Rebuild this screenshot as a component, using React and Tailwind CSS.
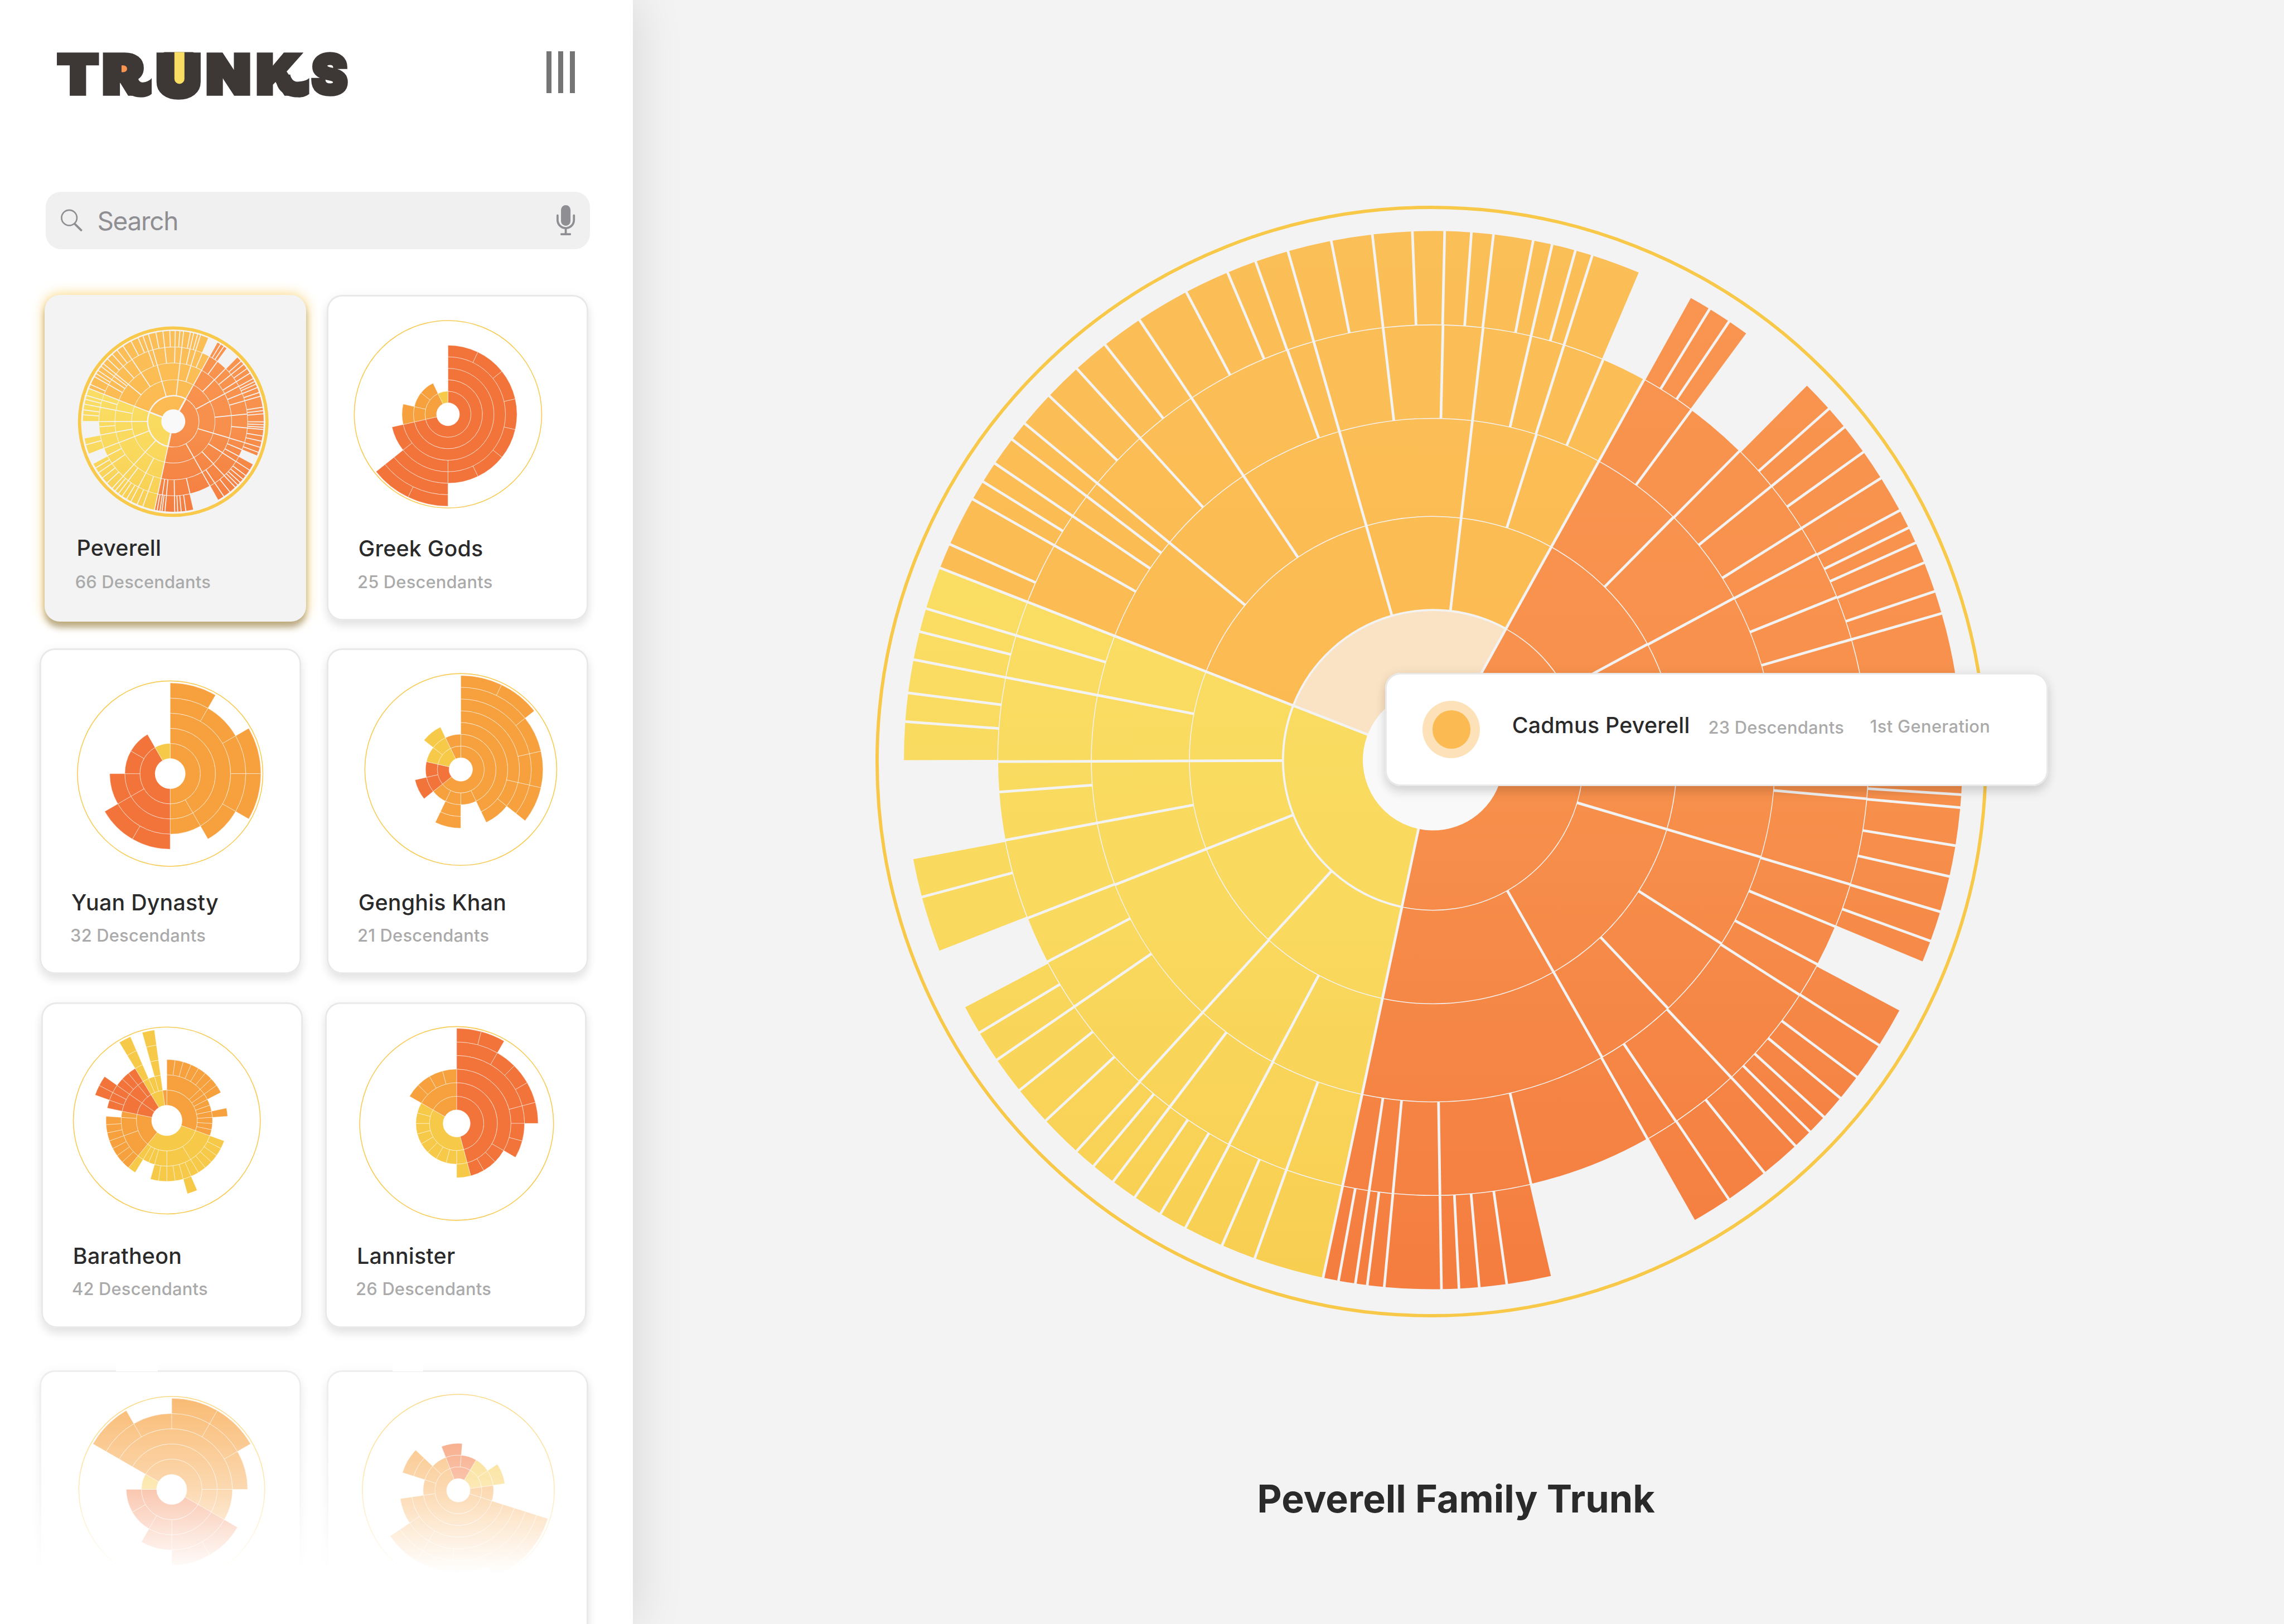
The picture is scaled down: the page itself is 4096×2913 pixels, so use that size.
const PALETTE = {
  amber: '#F7A13E',
  red: '#F2743A',
  yellow: '#F7C948',
};

const point = (r, deg) => {
  const t = (deg * Math.PI) / 180;
  return `${(r * Math.sin(t)).toFixed(2)} ${(-r * Math.cos(t)).toFixed(2)}`;
};

// Ring sector from angle a to b (clockwise from twelve o'clock), with parallel side gaps.
const sector = (r1, r2, a, b, gap = 0) => {
  const p1 = ((gap / 2 / r1) * 180) / Math.PI;
  const p2 = ((gap / 2 / r2) * 180) / Math.PI;
  const large = b - a > 180 ? 1 : 0;
  return `M${point(r1, a + p1)}L${point(r2, a + p2)}A${r2} ${r2} 0 ${large} 1 ${point(r2, b - p2)}L${point(r1, b - p1)}A${r1} ${r1} 0 ${large} 0 ${point(r1, a + p1)}Z`;
};

/* ---------- Peverell ---------- */

const PEVERELL = [
  { from: 133, to: 284, runs: [[29, 192, 291.3, 389]] },
  { from: 284, to: 461, runs: [[29, 61.6, 106.5, 150.4, 192, 222.5, 248.6, 269.8, 291.3, 344.08, 366.6, 389]] },
  {
    from: 461,
    to: 646.5,
    runs: [[29, 44.7, 61.7, 84.3, 106.5, 122.5, 136.6, 150.4, 192, 208, 222.4, 248.6, 259.4, 269.8, 280.95, 291.3, 309.5, 326.3, 344.08, 366.6, 377.6, 389]],
  },
  {
    from: 646.5,
    to: 823.5,
    runs: [[
      29, 36.4, 44.75, 51, 57.8, 61.75, 68, 73.9, 84.3, 95.1, 106.6, 112.5, 118, 122.65, 136.8, 146.1, 150.5, 167,
      179.1, 185.3, 188.45, 192, 199.7, 207.95, 217.2, 222.4, 235.5, 242.4, 248.7, 259.4, 265.8, 269.8, 280.95, 286.65,
      291.3, 299.55, 304.1, 307.3, 309.5, 317.7, 326.3, 340.45, 344.08, 353.4, 361.3, 366.6, 373, 377.5, 383, 389,
    ]],
  },
  {
    from: 823.5,
    to: 1001,
    runs: [
      [29, 31.5, 34, 36.4],
      [44.8, 48.4, 51, 54.4, 57.8, 61.85, 63.95, 65.75, 68.1, 71.4, 73.9, 81, 83.2, 85.2, 90.3, 92.1, 93.75, 95.15, 99.3, 102.7, 106.65, 110, 112.5],
      [118.1, 122.6, 126.8, 129.7, 132.4, 134.6, 136.8, 141.25, 146.05, 150.5],
      [167, 172, 175, 177.2, 179.1, 185.3, 187.15, 188.45, 190.3, 192, 199.7, 203.5, 207.9, 211, 214.3, 217.2, 219.9, 222.35, 227.05, 231.4, 235.5, 239, 242.3],
      [248.75, 255, 259.35],
      [
        269.85, 274.17, 277.3, 280.95, 284.05, 286.65, 291.3, 294.07, 299.55, 301.75, 304.1, 307.3, 309.5, 313.5, 317.7,
        321.7, 326.3, 332.2, 337.15, 340.4, 344.08, 348.9, 353.4, 357.75, 361.25, 364.15, 366.55, 370.9, 373, 375.6,
        377.5, 383,
      ],
    ],
  },
];

const branch = (mid) => {
  const m = mid % 360;
  if (m > 29 && m < 192) return 'orange';
  if (m > 192 && m < 291.3) return 'yellow';
  return 'amber';
};

function PeverellSunburst({ id, gap, arcGap, rimGap, highlight }) {
  const pieces = [];
  PEVERELL.forEach((ring, i) => {
    ring.runs.forEach((run) => {
      for (let k = 0; k < run.length - 1; k++) {
        const tone = branch((run[k] + run[k + 1]) / 2);
        const rim = tone === 'orange' ? arcGap : rimGap;
        const inner = ring.from + (i === 0 ? 0 : i === 1 ? rim / 2 : arcGap / 2);
        const outer = ring.to - (i === 4 ? 0 : i === 0 ? rim / 2 : arcGap / 2);
        const lit = highlight && i === 0 && tone === 'amber';
        pieces.push(
          <path
            key={`${i}-${run[k]}`}
            d={sector(inner, outer, run[k], run[k + 1], i === 0 ? rimGap * 1.2 : gap)}
            fill={lit ? '#FAE2C4' : `url(#${id}-${tone})`}
          />
        );
      }
    });
  });
  const grad = (name, y1, y2, c1, c2, c3) => (
    <linearGradient id={`${id}-${name}`} gradientUnits="userSpaceOnUse" x1="0" x2="0" y1={y1} y2={y2}>
      <stop offset="0" stopColor={c1} />
      <stop offset="0.5" stopColor={c2} />
      <stop offset="1" stopColor={c3} />
    </linearGradient>
  );
  return (
    <g>
      <defs>
        {grad('amber', -1001, 0, '#FBBF57', '#FCBD55', '#FCB951')}
        {grad('orange', -900, 1001, '#F99550', '#F7904C', '#F47D3F')}
        {grad('yellow', -360, 980, '#FADD63', '#F9D95E', '#F8CE51')}
      </defs>
      <circle r="133" fill="#F9F9F9" />
      {pieces}
    </g>
  );
}

/* ---------- Library of small trunks ---------- */
// Each level lists [tone, edge, edge, ...]; edges are counted in leaf units.

const GREEK = {
  units: 14,
  step: 21.75,
  ring: 178.2,
  cx: 229.3,
  cy: 225.8,
  levels: [
    [['red', 0, 10], ['amber', 10, 13], ['yellow', 13, 14]],
    [['red', 0, 10], ['amber', 10, 11, 12, 13]],
    [['red', 0, 10], ['amber', 10, 11]],
    [['red', 0, 7, 9, 10]],
    [['red', 0, 1, 2, 3, 4, 5, 6, 7, 9]],
    [['red', 7, 9]],
    [['red', 7, 8, 9]],
  ],
};

const YUAN = {
  units: 12,
  step: 28.6,
  ring: 176.3,
  cx: 247,
  cy: 237,
  levels: [
    [['amber', 0, 6], ['red', 6, 11], ['yellow', 11, 12]],
    [['amber', 0, 5, 6], ['red', 6, 8, 9, 10, 11]],
    [['amber', 0, 5, 6], ['red', 6, 8, 9]],
    [['amber', 0, 1, 2, 3, 4, 5], ['red', 6, 7, 8]],
    [['amber', 0, 1], ['amber', 2, 3, 4]],
  ],
};

const GENGHIS = {
  units: 14,
  step: 22.22,
  ring: 182.4,
  cx: 253.5,
  cy: 229.1,
  levels: [
    [['amber', 0, 9], ['red', 9, 11], ['yellow', 11, 13], ['amber', 13, 14]],
    [['amber', 0, 6, 7, 8, 9], ['red', 9, 10, 11], ['yellow', 11, 12, 13], ['amber', 13, 14]],
    [['amber', 0, 6], ['amber', 7, 8], ['red', 9, 10], ['yellow', 12, 13]],
    [['amber', 0, 4, 5, 6], ['amber', 7, 8]],
    [['amber', 0, 3, 4, 5]],
    [['amber', 0, 2, 3, 4, 5]],
    [['amber', 0, 1, 2]],
  ],
};

const BARATHEON = {
  units: 46,
  step: 28.8,
  ring: 177.7,
  cx: 237.5,
  cy: 223.4,
  levels: [
    [['amber', 0, 14], ['yellow', 14, 28], ['amber', 28, 36], ['red', 36, 39, 42], ['yellow', 42, 45], ['amber', 45, 46]],
    [
      ['amber', 0, 6, 7, 8, 9, 10, 11, 12, 13, 14],
      ['yellow', 14, 19, 23, 25, 26, 27, 28],
      ['amber', 28, 32, 35, 36],
      ['red', 36, 39, 41, 42],
      ['yellow', 42, 43, 44, 45],
    ],
    [
      ['amber', 0, 1, 2, 3, 4, 5, 6, 7, 8],
      ['amber', 10, 11],
      ['yellow', 14, 15, 16, 17, 18, 19, 20, 21, 22, 23, 24, 25],
      ['yellow', 27, 28],
      ['amber', 28, 29, 30, 31, 32, 33, 34, 35],
      ['red', 36, 37, 38, 39, 40, 41, 42],
      ['yellow', 42, 43],
      ['yellow', 44, 45],
    ],
    [['yellow', 20, 21], ['red', 37, 38, 39], ['yellow', 42, 43], ['yellow', 44, 45]],
    [['yellow', 42, 43], ['yellow', 44, 45]],
  ],
};

const LANNISTER = {
  units: 24,
  step: 25.7,
  ring: 184.2,
  cx: 248.8,
  cy: 229,
  levels: [
    [['red', 0, 11], ['yellow', 11, 20], ['amber', 20, 24]],
    [['red', 0, 11], ['yellow', 11, 12, 13, 14, 15, 16, 17, 18, 19, 20], ['amber', 20, 24]],
    [['red', 0, 8, 9, 10, 11], ['yellow', 11, 12], ['amber', 20, 21, 22, 23, 24]],
    [['red', 0, 5, 6, 7, 8]],
    [['red', 0, 2, 3, 4, 5, 6]],
    [['red', 0, 1, 2]],
  ],
};

const FADED_LEFT = {
  units: 12,
  step: 28.7,
  ring: 176.8,
  cx: 250,
  cy: 225.2,
  levels: [
    [['amber', 10, 16], ['red', 4, 9], ['yellow', 9, 10]],
    [['amber', 10, 15, 16], ['red', 4, 6, 7, 8, 9]],
    [['amber', 10, 15, 16], ['red', 4, 6, 7]],
    [['amber', 10, 11, 12, 13, 14, 15], ['red', 4, 5, 6]],
    [['amber', 10, 11], ['amber', 12, 13, 14]],
  ],
};

const FADED_RIGHT = {
  units: 14,
  offset: 4.7,
  step: 22.2,
  ring: 182.5,
  cx: 248.9,
  cy: 227,
  levels: [
    [['red', -1, 1], ['yellow', 1, 3], ['amber', 3, 4, 13]],
    [['red', -1, 0, 1], ['yellow', 1, 2, 3], ['amber', 3, 4, 10, 11, 12, 13]],
    [['red', -1, 0], ['yellow', 2, 3], ['amber', 4, 10], ['amber', 11, 12]],
    [['amber', 4, 8, 9, 10], ['amber', 11, 12]],
    [['amber', 4, 7, 8, 9]],
    [['amber', 4, 6, 7, 8, 9]],
    [['amber', 4, 5, 6]],
  ],
};

function Sunburst({ data }) {
  const unit = 360 / data.units;
  const offset = data.offset || 0;
  const pieces = [];
  data.levels.forEach((groups, i) => {
    groups.forEach(([tone, ...edges]) => {
      for (let k = 0; k < edges.length - 1; k++) {
        pieces.push(
          <path
            key={`${i}-${edges[k]}`}
            d={sector((i + 1) * data.step, (i + 2) * data.step, offset + edges[k] * unit, offset + edges[k + 1] * unit)}
            fill={PALETTE[tone]}
            stroke="#FFFFFF"
            strokeOpacity="0.6"
            strokeWidth="0.9"
          />
        );
      }
    });
  });
  return (
    <svg viewBox="0 0 495 454" className="block h-[454px] w-[495px] shrink-0">
      <g transform={`translate(${data.cx} ${data.cy})`}>
        <circle r={data.ring - 0.9} fill="none" stroke="#F8CB55" strokeWidth="1.7" />
        {pieces}
      </g>
    </svg>
  );
}

function TrunkCard({ name, count, data }) {
  return (
    <article className="flex h-[616px] w-[495px] shrink-0 flex-col rounded-[29px] bg-white shadow-[inset_0_0_0_3px_#e8e8e8,0_11px_16px_rgba(0,0,0,0.09),0_0_22px_rgba(0,0,0,0.035)]">
      <Sunburst data={data} />
      {name && (
        <>
          <h2 className="mt-[1px] ml-[60px] text-[41.5px] leading-[50px] font-medium tracking-[0.25px] text-[#2a2a2a]">{name}</h2>
          <p className="mt-[18px] ml-[58px] text-[32.5px] leading-[40px] font-medium tracking-[0.25px] text-[#aaaaaa]">{count} Descendants</p>
        </>
      )}
    </article>
  );
}

function SelectedCard() {
  return (
    <article className="flex h-[618px] w-[495px] shrink-0 flex-col rounded-[29px] bg-[#f3f3f3] shadow-[0_11px_11px_rgba(60,45,0,0.32),0_0_24px_rgba(250,195,60,0.75)]">
      <svg viewBox="0 0 495 453" className="block h-[453px] w-[495px] shrink-0">
        <circle cx="243.3" cy="239.8" r="177.3" fill="none" stroke="#F9C94C" strokeWidth="6" />
        <g transform="translate(243.4 239.2) scale(0.1708)">
          <PeverellSunburst id="small" gap={10.5} arcGap={6} rimGap={15} />
        </g>
      </svg>
      <h2 className="mt-[1px] ml-[61px] text-[41.5px] leading-[50px] font-medium tracking-[0.25px] text-[#2a2a2a]">Peverell</h2>
      <p className="mt-[19px] ml-[58px] text-[32.5px] leading-[40px] font-medium tracking-[0.25px] text-[#aaaaaa]">66 Descendants</p>
    </article>
  );
}

function Logo() {
  return (
    <svg viewBox="-10 -40 590 180" className="-mt-[40px] -ml-[10px] block h-[180px] w-[590px] overflow-visible" aria-label="Trunks">
      <g fill="#3D3736" stroke="#3D3736" strokeWidth="8" className="[font-size:102px] font-black">
        <text x="5" y="86" textLength="77" lengthAdjust="spacingAndGlyphs">T</text>
        <text x="90" y="86" textLength="78" lengthAdjust="spacingAndGlyphs">R</text>
        <text x="191" y="92" textLength="86" lengthAdjust="spacingAndGlyphs" className="[font-size:110px]">U</text>
        <text x="286" y="86" textLength="84" lengthAdjust="spacingAndGlyphs">N</text>
        <text x="381" y="86" textLength="84" lengthAdjust="spacingAndGlyphs">K</text>
        <text x="486" y="86" textLength="67" lengthAdjust="spacingAndGlyphs">S</text>
      </g>
      <g fill="#3D3736">
        <path d="M126 56 157 53C157 62 163 65 168 64C175 63 180 60 183 56V86C177 91 169 93 160 92.500C142 91 128 82 126 56Z" />
        <path d="M417 56 445 49C447 60 454 64 462 62.500C471 62 477 60 481 56V86C475 91 467 93 458 92.500C436 91 420 82 417 56Z" />
        <rect x="204" y="7" width="60" height="68" rx="4" />
        <rect x="110" y="22" width="34" height="32" />
      </g>
      <path d="M226 7h19v50.500a9.500 9.500 0 0 1-19 0z" fill="#F9DC62" />
      <path d="M126 32h3.500a7 6.500 0 0 1 0 13h-3.500z" fill="#F99550" />
    </svg>
  );
}

function SearchBar() {
  return (
    <div className="ml-[87px] flex h-[108px] w-[1029px] items-center rounded-[29px] bg-[#f0f0f0]">
      <svg viewBox="0 0 42 42" className="ml-[28px] size-[42px]" fill="none" stroke="#8E8E93">
        <circle cx="16" cy="16.500" r="14.500" strokeWidth="2.800" />
        <path d="M26.500 28 38.500 40" strokeWidth="4" strokeLinecap="round" />
      </svg>
      <span className="mt-[2px] ml-[27px] text-[48.5px] leading-[60px] font-normal tracking-[-1.4px] text-[#8e8e93]">Search</span>
      <svg viewBox="0 0 35 57" className="mr-[28px] ml-auto h-[57px] w-[35px]" fill="#8E8E93">
        <rect x="8.500" y="0" width="18" height="39" rx="9" />
        <path d="M2 19.500V28a15.500 15.500 0 0 0 31 0v-8.500" fill="none" stroke="#8E8E93" strokeWidth="4" strokeLinecap="round" />
        <rect x="15.500" y="43" width="4" height="11" />
        <rect x="7.500" y="53" width="20" height="4" rx="1.500" />
      </svg>
    </div>
  );
}

function Sidebar() {
  return (
    <aside className="relative z-10 flex h-full w-[1197px] shrink-0 flex-col overflow-hidden bg-white">
      <header className="mt-[92px] mr-[110px] ml-[104px] flex h-[100px] items-start justify-between">
        <Logo />
        <button className="mt-[5px] flex h-[79px] gap-[13px]" aria-label="Menu">
          <span className="h-full w-[9px] bg-[#757575]" />
          <span className="h-full w-[9px] bg-[#757575]" />
          <span className="h-full w-[9px] bg-[#757575]" />
        </button>
      </header>
      <div className="mt-[171px]">
        <SearchBar />
      </div>
      <div className="mt-[87px] flex h-[669px] gap-[39px] pl-[84px]">
        <SelectedCard />
        <TrunkCard name="Greek Gods" count={25} data={GREEK} />
      </div>
      <div className="flex h-[669px] gap-[48px] pl-[75px]">
        <TrunkCard name="Yuan Dynasty" count={32} data={YUAN} />
        <TrunkCard name="Genghis Khan" count={21} data={GENGHIS} />
      </div>
      <div className="flex h-[696px] gap-[42px] pl-[78px]">
        <TrunkCard name="Baratheon" count={42} data={BARATHEON} />
        <TrunkCard name="Lannister" count={26} data={LANNISTER} />
      </div>
      <div className="flex h-[480px] shrink-0 gap-[48px] pl-[75px]">
        <TrunkCard data={FADED_LEFT} />
        <TrunkCard data={FADED_RIGHT} />
      </div>
      <div className="absolute bottom-0 left-[40px] h-[502px] w-[1069px] bg-[linear-gradient(to_bottom,rgba(255,255,255,0.14)_0px,rgba(255,255,255,0.28)_75px,rgba(255,255,255,0.6)_247px,rgba(255,255,255,0.87)_350px,#fff_405px)]" />
      <div className="absolute top-[2578px] left-[219px] h-[17px] w-[80px] bg-white" />
      <div className="absolute top-[2578px] left-[742px] h-[17px] w-[58px] bg-white" />
    </aside>
  );
}

function Tooltip() {
  return (
    <div className="absolute top-[1273px] left-[1423px] flex h-[214px] w-[1254px] items-center rounded-[29px] bg-white shadow-[inset_0_0_0_3px_#e8e8e8,0_11px_18px_rgba(0,0,0,0.12),0_0_24px_rgba(0,0,0,0.06)]">
      <span className="ml-[71px] flex size-[108px] items-center justify-center rounded-full bg-[#fde2b9]">
        <span className="size-[72px] rounded-full bg-[#fbba52]" />
      </span>
      <span className="-mt-[16px] ml-[61px] w-[371px] text-[41.5px] leading-[50px] font-medium tracking-[0.25px] whitespace-nowrap text-[#2a2a2a]">Cadmus Peverell</span>
      <span className="-mt-[8px] w-[306px] text-[32.5px] leading-[40px] font-medium tracking-[0.3px] whitespace-nowrap text-[#aaaaaa]">23 Descendants</span>
      <span className="-mt-[11px] text-[32.5px] leading-[40px] font-medium tracking-[0.4px] whitespace-nowrap text-[#aaaaaa]">1st Generation</span>
    </div>
  );
}

function TrunkView() {
  return (
    <main className="relative flex h-full grow flex-col bg-[#f3f3f3]">
      <svg viewBox="-1051.5 -1051.5 2103 2103" className="mt-[389.5px] ml-[458.5px] block size-[2103px] shrink-0">
        <circle r="1048.400" fill="none" stroke="#F8C848" strokeWidth="6.200" />
        <g transform="translate(3.300 -2.700)">
          <PeverellSunburst id="large" gap={5} arcGap={1.6} rimGap={4} highlight />
        </g>
      </svg>
      <h1 className="mt-[298.5px] pr-[9px] text-center text-[72px] leading-[90px] font-bold text-[#2a2a2a]">Peverell Family Trunk</h1>
      <Tooltip />
    </main>
  );
}

export default function App() {
  return (
    <div className="h-screen w-screen overflow-hidden bg-[#f3f3f3]">
      <div className="flex h-[3073px] w-[4320px] font-['Inter',sans-serif] [zoom:0.948148]">
        <div className="relative z-10 flex shadow-[0_0_90px_rgba(0,0,0,0.13)]">
          <Sidebar />
        </div>
        <TrunkView />
      </div>
    </div>
  );
}
